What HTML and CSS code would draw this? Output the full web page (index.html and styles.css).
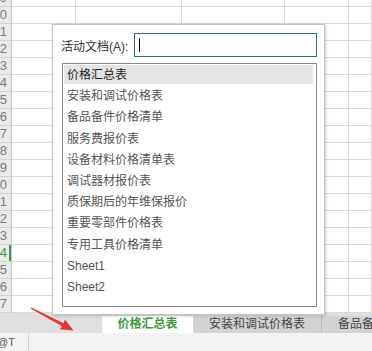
FILE: index.html
```html
<!DOCTYPE html>
<html lang="zh">
<head>
    <meta charset="UTF-8">
    <title>活动文档</title>
    <link rel="stylesheet" href="styles.css">
</head>
<body>
    <div class="window">
        <!-- Sheet grid -->
        <div class="sheet">
            <div class="rows">
                <div class="row"><div class="rh">9</div><div class="c"></div><div class="c"></div><div class="c"></div><div class="c"></div><div class="c"></div></div>
                <div class="row"><div class="rh">10</div><div class="c"></div><div class="c"></div><div class="c"></div><div class="c"></div><div class="c"></div></div>
                <div class="row"><div class="rh">11</div><div class="c"></div><div class="c"></div><div class="c"></div><div class="c"></div><div class="c"></div></div>
                <div class="row"><div class="rh">12</div><div class="c"></div><div class="c"></div><div class="c"></div><div class="c"></div><div class="c"></div></div>
                <div class="row"><div class="rh">13</div><div class="c"></div><div class="c"></div><div class="c"></div><div class="c"></div><div class="c"></div></div>
                <div class="row"><div class="rh">14</div><div class="c"></div><div class="c"></div><div class="c"></div><div class="c"></div><div class="c"></div></div>
                <div class="row"><div class="rh">15</div><div class="c"></div><div class="c"></div><div class="c"></div><div class="c"></div><div class="c"></div></div>
                <div class="row"><div class="rh">16</div><div class="c"></div><div class="c"></div><div class="c"></div><div class="c"></div><div class="c"></div></div>
                <div class="row"><div class="rh">17</div><div class="c"></div><div class="c"></div><div class="c"></div><div class="c"></div><div class="c"></div></div>
                <div class="row"><div class="rh">18</div><div class="c"></div><div class="c"></div><div class="c"></div><div class="c"></div><div class="c"></div></div>
                <div class="row"><div class="rh">19</div><div class="c"></div><div class="c"></div><div class="c"></div><div class="c"></div><div class="c"></div></div>
                <div class="row"><div class="rh">20</div><div class="c"></div><div class="c"></div><div class="c"></div><div class="c"></div><div class="c"></div></div>
                <div class="row"><div class="rh">21</div><div class="c"></div><div class="c"></div><div class="c"></div><div class="c"></div><div class="c"></div></div>
                <div class="row"><div class="rh">22</div><div class="c"></div><div class="c"></div><div class="c"></div><div class="c"></div><div class="c"></div></div>
                <div class="row"><div class="rh">23</div><div class="c"></div><div class="c"></div><div class="c"></div><div class="c"></div><div class="c"></div></div>
                <div class="row"><div class="rh active">24</div><div class="c"></div><div class="c"></div><div class="c"></div><div class="c"></div><div class="c"></div></div>
                <div class="row"><div class="rh">25</div><div class="c"></div><div class="c"></div><div class="c"></div><div class="c"></div><div class="c"></div></div>
                <div class="row"><div class="rh">26</div><div class="c"></div><div class="c"></div><div class="c"></div><div class="c"></div><div class="c"></div></div>
                <div class="row"><div class="rh">27</div><div class="c"></div><div class="c"></div><div class="c"></div><div class="c"></div><div class="c"></div></div>
            </div>
        </div>

        <!-- Sheet tabs -->
        <div class="tabbar">
            <div class="tab current">价格汇总表</div>
            <div class="tab">安装和调试价格表</div>
            <div class="tab">备品备件价格清单</div>
        </div>

        <!-- Status bar -->
        <div class="statusbar">
            <span class="status-icon">@T</span>
            <span class="status-sep"></span>
        </div>

        <!-- Activate document popup -->
        <div class="doc-popup">
            <div class="doc-field">
                <span class="doc-label">活动文档(A):</span>
                <div class="doc-input"><span class="caret"></span></div>
            </div>
            <div class="doc-list">
                <div class="doc-item selected">价格汇总表</div>
                <div class="doc-item">安装和调试价格表</div>
                <div class="doc-item">备品备件价格清单</div>
                <div class="doc-item">服务费报价表</div>
                <div class="doc-item">设备材料价格清单表</div>
                <div class="doc-item">调试器材报价表</div>
                <div class="doc-item">质保期后的年维保报价</div>
                <div class="doc-item">重要零部件价格表</div>
                <div class="doc-item">专用工具价格清单</div>
                <div class="doc-item">Sheet1</div>
                <div class="doc-item">Sheet2</div>
            </div>
        </div>

        <!-- Red annotation arrow -->
        <svg class="arrow" width="372" height="351" viewBox="0 0 372 351">
            <polygon points="30.6,308.5 62.3,326.2 59.8,329.2 73.5,330.5 65,319.6 63.6,323.2 31.2,307.5" fill="#e8322b"/>
        </svg>
    </div>
</body>
</html>
```

FILE: styles.css
```css
body {
    margin: 0;
    padding: 0;
    background: #ffffff;
    font-family: "Liberation Sans", "Noto Sans CJK SC", sans-serif;
}

.window {
    position: relative;
    width: 372px;
    height: 351px;
    overflow: hidden;
}

/* Grid */
.sheet {
    height: 313px;
    overflow: hidden;
}

.rows {
    margin-top: -10px;
}

.row {
    display: grid;
    grid-template-columns: 12px 64px 106px 103px 64px 1fr;
    height: 17px;
}

.rh {
    box-sizing: border-box;
    background: #eaeaea;
    border-right: 1px solid #c4c4c4;
    border-bottom: 1px solid #d2d2d2;
    color: #7a7a7a;
    font-size: 13px;
    line-height: 16px;
    text-align: right;
    padding-right: 4px;
    overflow: hidden;
    white-space: nowrap;
    direction: rtl;
}

.rh.active {
    color: #3c9b3e;
    box-shadow: inset -2px 0 0 #3c9b3e;
}

.c {
    box-sizing: border-box;
    border-right: 1px solid #dadada;
    border-bottom: 1px solid #dadada;
}

/* Tabs */
.tabbar {
    height: 20px;
    background: #e0e0e0;
    display: flex;
    align-items: flex-end;
    padding-left: 102px;
    white-space: nowrap;
}

.tab {
    height: 17px;
    line-height: 17px;
    font-size: 12px;
    color: #444;
    background: #d3d3d3;
    border-right: 1px solid #bcbcbc;
    text-align: center;
    flex-shrink: 0;
}

.tab:nth-child(2) {
    width: 128px;
}

.tab:nth-child(3) {
    width: 128px;
}

.tab.current {
    width: 91px;
    background: #ffffff;
    color: #3a9a3c;
    font-weight: bold;
    border-right: none;
}

.statusbar {
    height: 18px;
    background: #f3f3f3;
    display: flex;
    align-items: center;
}

.status-icon {
    font-size: 11px;
    color: #555;
    margin-left: -3px;
    width: 31px;
}

.status-sep {
    width: 1px;
    height: 18px;
    background: #d4d4d4;
}

/* Popup */
.doc-popup {
    position: absolute;
    left: 52px;
    top: 24px;
    width: 273px;
    height: 291px;
    box-sizing: border-box;
    background: #ffffff;
    border: 1px solid #c2c2c2;
    box-shadow: 1px 1px 3px rgba(0,0,0,0.2);
    padding: 8px 7px 7px 8px;
}

.doc-field {
    display: flex;
    align-items: center;
    height: 24px;
}

.doc-label {
    font-size: 12px;
    color: #333;
    width: 73px;
    flex-shrink: 0;
    white-space: nowrap;
}

.doc-input {
    flex: 1;
    height: 24px;
    box-sizing: border-box;
    border: 1px solid #2b6d99;
    padding: 4px 4px;
}

.caret {
    display: block;
    width: 1px;
    height: 14px;
    background: #000;
}

.doc-list {
    margin: 6px 0 0 1px;
    height: 244px;
    box-sizing: border-box;
    border: 1px solid #8a8a8a;
    padding: 1px 3px 0 1px;
}

.doc-item {
    height: 19px;
    line-height: 20px;
    margin-bottom: 2.2px;
    padding-left: 3px;
    font-size: 12px;
    color: #555;
    white-space: nowrap;
}

.doc-item.selected {
    background: #e4e4e4;
    color: #1e1e1e;
}

.arrow {
    position: absolute;
    left: 0;
    top: 0;
    pointer-events: none;
}
```
